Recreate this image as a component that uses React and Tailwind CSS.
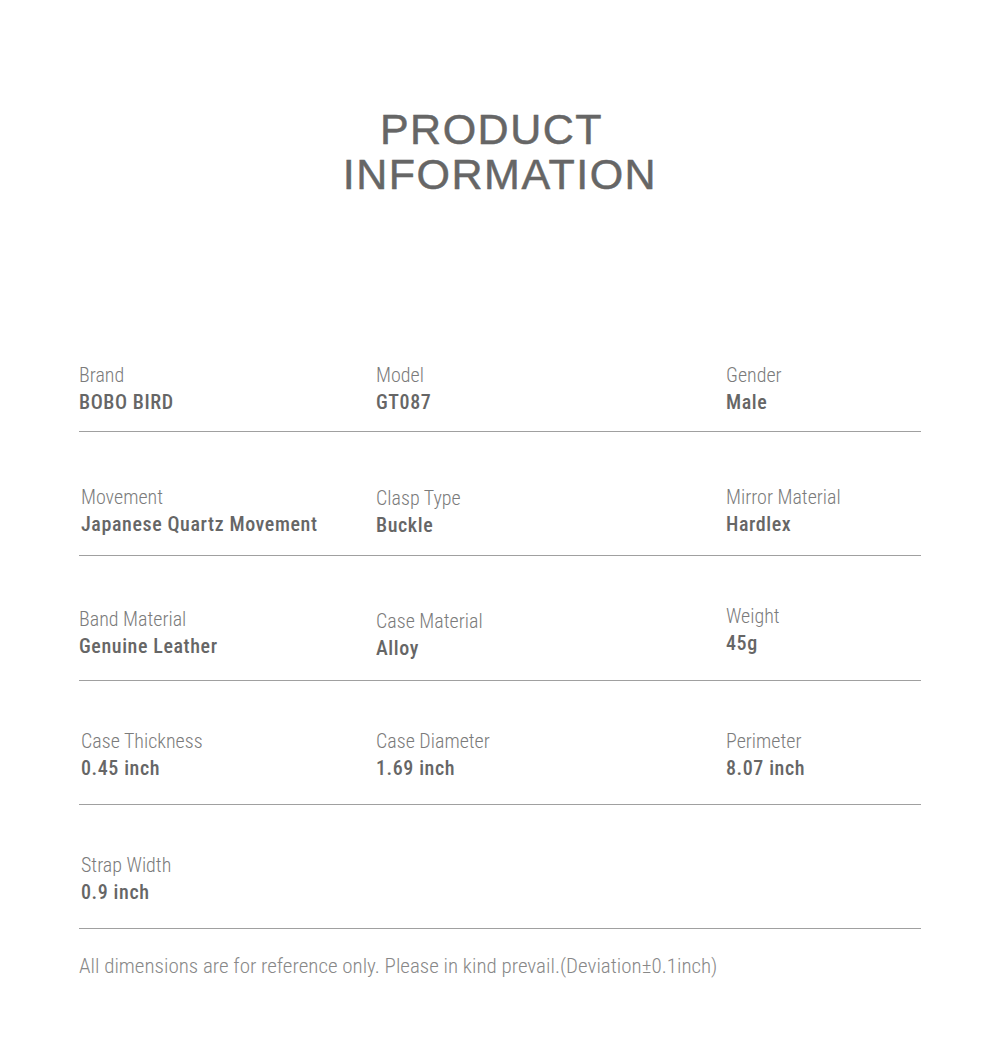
const rows = [
  {
    pad: "pt-[55px] pb-[15px]",
    cells: [
      { label: "Brand", value: "BOBO BIRD" },
      { label: "Model", value: "GT087" },
      { label: "Gender", value: "Male" },
    ],
  },
  {
    pad: "pt-[52px] pb-[17px]",
    cells: [
      { label: "Movement", value: "Japanese Quartz Movement", cls: "pl-[2px]" },
      { label: "Clasp Type", value: "Buckle", cls: "translate-y-[1px]" },
      { label: "Mirror Material", value: "Hardlex" },
    ],
  },
  {
    pad: "pt-[50px] pb-[20px]",
    cells: [
      { label: "Band Material", value: "Genuine Leather" },
      { label: "Case Material", value: "Alloy", cls: "translate-y-[2px]" },
      { label: "Weight", value: "45g", cls: "-translate-y-[3px]" },
    ],
  },
  {
    pad: "pt-[47px] pb-[22px]",
    cells: [
      { label: "Case Thickness", value: "0.45 inch", cls: "pl-[2px]" },
      { label: "Case Diameter", value: "1.69 inch" },
      { label: "Perimeter", value: "8.07 inch" },
    ],
  },
  {
    pad: "pt-[47px] pb-[22px]",
    cells: [{ label: "Strap Width", value: "0.9 inch", cls: "pl-[2px]" }],
  },
];

const InfoCell = ({ label, value, cls = "" }) => (
  <div className={cls}>
    <div className="text-[20px] leading-[27px] font-light text-[#7b7b7b]">{label}</div>
    <div className="text-[20px] leading-[27px] font-medium tracking-[0.6px] text-[#666666]">{value}</div>
  </div>
);

const App = () => {
  return (
    <div className="min-h-screen bg-white font-['Roboto_Condensed',sans-serif]">
      <div className="w-[842px] mx-auto pt-[107px] pb-[80px]">
        {/* Title */}
        <h1 className="flex flex-col items-center font-['Liberation_Sans',Arial,sans-serif] text-[43px] leading-[45px] tracking-[1.5px] text-[#666666] [-webkit-text-stroke:0.5px_#666666]">
          <span className="pr-[17px]">PRODUCT</span>
          <span>INFORMATION</span>
        </h1>

        {/* Spec table */}
        <div className="mt-[110px]">
          {rows.map((row, i) => (
            <div
              key={i}
              className={`grid grid-cols-[297px_350px_1fr] border-b border-[#a0a0a0] ${row.pad}`}
            >
              {row.cells.map((cell) => (
                <InfoCell key={cell.label} {...cell} />
              ))}
            </div>
          ))}
        </div>

        <p className="mt-[24px] text-[21px] leading-[27px] font-light text-[#888888]">
          All dimensions are for reference only. Please in kind prevail.(Deviation±0.1inch)
        </p>
      </div>
    </div>
  );
};

export default App;
